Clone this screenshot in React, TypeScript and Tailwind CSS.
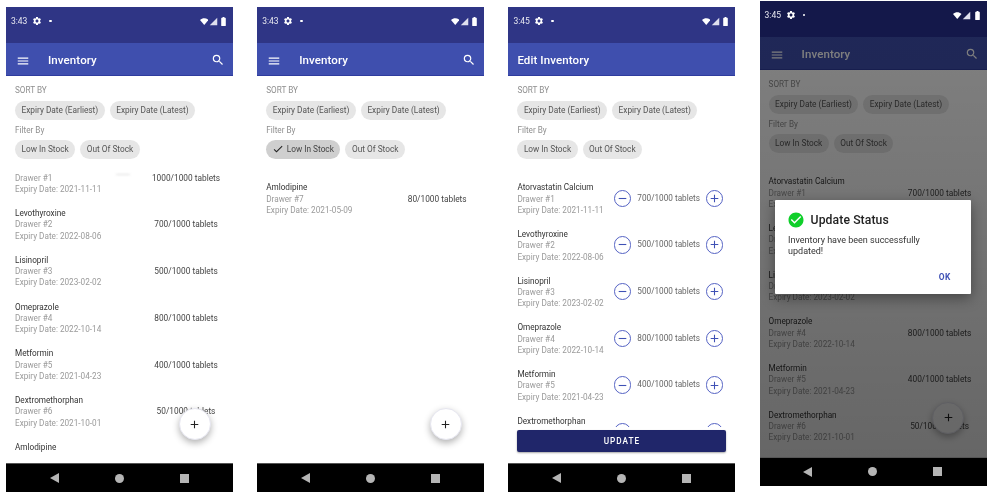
import { MdAdd, MdBatteryStd, MdCheck, MdCheckCircle, MdMenu, MdRemove, MdSearch, MdSettings, MdSignalCellular4Bar } from "react-icons/md";

interface Med {
  name: string;
  drawer: number;
  expiry: string;
  qty: string;
}

const stock: Med[] = [
  { name: "Atorvastatin Calcium", drawer: 1, expiry: "2021-11-11", qty: "1000/1000" },
  { name: "Levothyroxine", drawer: 2, expiry: "2022-08-06", qty: "700/1000" },
  { name: "Lisinopril", drawer: 3, expiry: "2023-02-02", qty: "500/1000" },
  { name: "Omeprazole", drawer: 4, expiry: "2022-10-14", qty: "800/1000" },
  { name: "Metformin", drawer: 5, expiry: "2021-04-23", qty: "400/1000" },
  { name: "Dextromethorphan", drawer: 6, expiry: "2021-10-01", qty: "50/1000" },
  { name: "Amlodipine", drawer: 7, expiry: "2021-05-09", qty: "80/1000" },
];

const editStock = stock.slice(0, 6).map((m, i) => ({ ...m, qty: ["700/1000", "500/1000", "500/1000", "800/1000", "400/1000", "50/1000"][i] }));
const dialogStock = stock.slice(0, 6).map((m, i) => ({ ...m, qty: i === 0 ? "700/1000" : m.qty }));

const StatusBar = ({ time, dark }: { time: string; dark?: boolean }) => (
  <div className={`h-[36px] shrink-0 flex items-center pl-[5px] pr-[5px] pb-[8px] text-white ${dark ? "bg-[#14184a]" : "bg-[#2f3585]"}`}>
    <span className="text-[8.5px] w-[17px] text-[#e8e8f0]">{time}</span>
    <MdSettings className="text-[10px] ml-[4px]" />
    <span className="w-[2.5px] h-[2.5px] rounded-full bg-white ml-[7px]" />
    <svg viewBox="0 0 10 8" className="w-[8.5px] h-[7px] ml-auto fill-white">
      <path d="M0 2.2 C3 -0.6 7 -0.6 10 2.2 L5 8 Z" />
    </svg>
    <MdSignalCellular4Bar className="text-[9px] ml-[0.5px] text-[#dfe0ee]" />
    <MdBatteryStd className="text-[11px] ml-[0.5px] -mr-[1px]" />
  </div>
);

const Toolbar = ({ title }: { title: string }) => {
  const edit = title !== "Inventory";
  return (
    <div className={`h-[33px] shrink-0 bg-[#3f4fae] border-b border-[#2f3c9e] flex items-center pt-[3px] text-white ${edit ? "pl-[9px]" : "pl-[10px]"} pr-[8px]`}>
      {!edit && <MdMenu className="text-[14px] mr-[18px]" />}
      <span className="text-[11.5px] font-medium tracking-[0.1px]">{title}</span>
      {!edit && <MdSearch className="text-[14px] ml-auto -mt-[1px]" />}
    </div>
  );
};

const Chip = ({ label, selected }: { label: string; selected?: boolean }) => (
  <span className={`h-[19px] rounded-full flex items-center px-[6.5px] text-[8.3px] whitespace-nowrap ${selected ? "bg-[#cfcfcf] text-[#444]" : "bg-[#e6e6e6] text-[#555]"}`}>
    {selected && <MdCheck className="text-[12px] text-[#222] -ml-[1px] mr-[3px]" />}
    {label}
  </span>
);

const Filters = ({ lowSelected }: { lowSelected?: boolean }) => (
  <div className="px-[9px] pt-[8.5px] shrink-0">
    <div className="h-[11px] leading-[11px] text-[8.2px] text-[#8f8f8f] mb-[5px]">SORT BY</div>
    <div className="flex gap-[5px]">
      <Chip label="Expiry Date (Earliest)" />
      <Chip label="Expiry Date (Latest)" />
    </div>
    <div className="h-[11px] leading-[11px] text-[8.2px] text-[#8f8f8f] mt-[5px] mb-[4px]">Filter By</div>
    <div className="flex gap-[5px]">
      <Chip label="Low In Stock" selected={lowSelected} />
      <Chip label="Out Of Stock" />
    </div>
  </div>
);

const RoundBtn = ({ minus }: { minus?: boolean }) => (
  <span className="w-[17.5px] h-[17.5px] shrink-0 rounded-full border border-[#5563c4] flex items-center justify-center text-[#3f51b5]">
    {minus ? <MdRemove className="text-[13px]" /> : <MdAdd className="text-[13px]" />}
  </span>
);

const Row = ({ med, edit }: { med: Med; edit?: boolean }) => (
  <div className="h-[46.7px] flex items-start px-[9px] text-[8.2px] leading-[11.3px]">
    <div className="flex-1 min-w-0 whitespace-nowrap">
      <div className="text-[#333]">{med.name}</div>
      <div className="text-[#9a9a9a]">Drawer #{med.drawer}</div>
      <div className="text-[#9a9a9a]">Expiry Date: {med.expiry}</div>
    </div>
    {edit ? (
      <div className="flex items-center -mt-[4.1px] mr-[3px] h-[34px] pt-[6px]">
        <RoundBtn minus />
        <span className="w-[74.5px] text-center text-[#666] whitespace-nowrap">{med.qty} tablets</span>
        <RoundBtn />
      </div>
    ) : (
      <div className="w-[80px] mt-[11.3px] -mr-[2px] text-center text-[8.3px] text-[#444] whitespace-nowrap">{med.qty} tablets</div>
    )}
  </div>
);

const NavBar = () => (
  <div className="h-[29px] shrink-0 bg-black flex items-center justify-center gap-[56px] pr-[1px] border-t border-[#555]">
    <svg viewBox="0 0 9 10" className="w-[9px] h-[10px] fill-[#b5b5b5]">
      <path d="M9 0 V10 L0 5 Z" />
    </svg>
    <span className="w-[9px] h-[9px] rounded-full bg-[#b5b5b5]" />
    <span className="w-[9px] h-[9px] bg-[#b5b5b5]" />
  </div>
);

const Fab = () => (
  <div className="absolute left-[172.5px] bottom-[52px] w-[32px] h-[32px] rounded-full bg-white border border-[#e6e6f0] shadow-[0_3px_7px_rgba(0,0,0,0.3)] flex items-center justify-center">
    <MdAdd className="text-[13px] text-[#222]" />
  </div>
);

export default function App() {
  return (
    <div className="w-[1000px] h-[500px] bg-white overflow-hidden flex items-start gap-[24.2px] pl-[6px] pt-[7px] blur-[0.5px] font-['Roboto',sans-serif]">
      {/* list, scrolled a bit */}
      <div className="relative w-[227px] h-[485px] flex flex-col shrink-0">
        <StatusBar time="3:43" />
        <Toolbar title="Inventory" />
        <Filters />
        <div className="relative flex-1 min-h-0 mt-[11.5px] mb-[10px] overflow-hidden">
          <div className="-mt-[8.5px]">
            {stock.map((m) => (
              <Row key={m.name} med={m} />
            ))}
          </div>
          <span className="absolute left-[110px] top-[4px] w-[14px] h-[1px] bg-[#ddd] blur-[1px]" />
        </div>
        <NavBar />
        <Fab />
      </div>

      {/* filtered */}
      <div className="relative w-[227px] h-[485px] flex flex-col shrink-0">
        <StatusBar time="3:43" />
        <Toolbar title="Inventory" />
        <Filters lowSelected />
        <div className="flex-1 mt-[11.5px] overflow-hidden">
          <div className="mt-[12.4px]">
            <Row med={stock[6]} />
          </div>
        </div>
        <NavBar />
        <Fab />
      </div>

      {/* edit */}
      <div className="relative w-[227px] h-[485px] flex flex-col shrink-0">
        <StatusBar time="3:45" />
        <Toolbar title="Edit Inventory" />
        <Filters />
        <div className="flex-1 min-h-0 mt-[11.5px] overflow-hidden">
          <div className="mt-[12.4px]">
            {editStock.map((m) => (
              <Row key={m.name} med={m} edit />
            ))}
          </div>
        </div>
        <div className="h-[36.5px] shrink-0 px-[9px] pt-[0.5px] pb-[13.5px]">
          <button className="w-full h-[22.5px] rounded-[2px] bg-[#20266a] text-white text-[8.2px] font-medium tracking-[1px] shadow-[0_1px_2px_rgba(0,0,0,0.35)]">
            UPDATE
          </button>
        </div>
        <NavBar />
      </div>

      {/* update dialog */}
      <div className="relative w-[227px] h-[484.5px] -mt-[6px] flex flex-col shrink-0">
        <StatusBar time="3:45" dark />
        <Toolbar title="Inventory" />
        <Filters />
        <div className="flex-1 min-h-0 mt-[11.5px] overflow-hidden">
          <div className="mt-[12.4px]">
            {dialogStock.map((m) => (
              <Row key={m.name} med={m} />
            ))}
          </div>
        </div>
        <NavBar />
        <Fab />
        <div className="absolute left-0 right-0 top-[36px] bottom-[29px] bg-gradient-to-b from-black/50 to-black/60" />
        <div className="absolute left-[15px] top-[198.5px] w-[196px] h-[94px] rounded-[1px] bg-white shadow-[0_4px_14px_rgba(0,0,0,0.4)] pl-[13.5px] pr-[8px] pt-[12px]">
          <div className="flex items-center h-[17px]">
            <MdCheckCircle className="text-[18px] text-[#0fcf2a] -ml-[1px] mr-[5.5px]" />
            <span className="text-[12.2px] font-medium text-[#222] tracking-[0.1px]">Update Status</span>
          </div>
          <p className="mt-[6px] text-[9px] leading-[11px] text-[#333] w-[150px]">Inventory have been successfully updated!</p>
          <div className="absolute right-[20px] bottom-[9.5px] text-[8.4px] font-bold text-[#3f51b5] tracking-[0.3px]">OK</div>
        </div>
      </div>
    </div>
  );
}
